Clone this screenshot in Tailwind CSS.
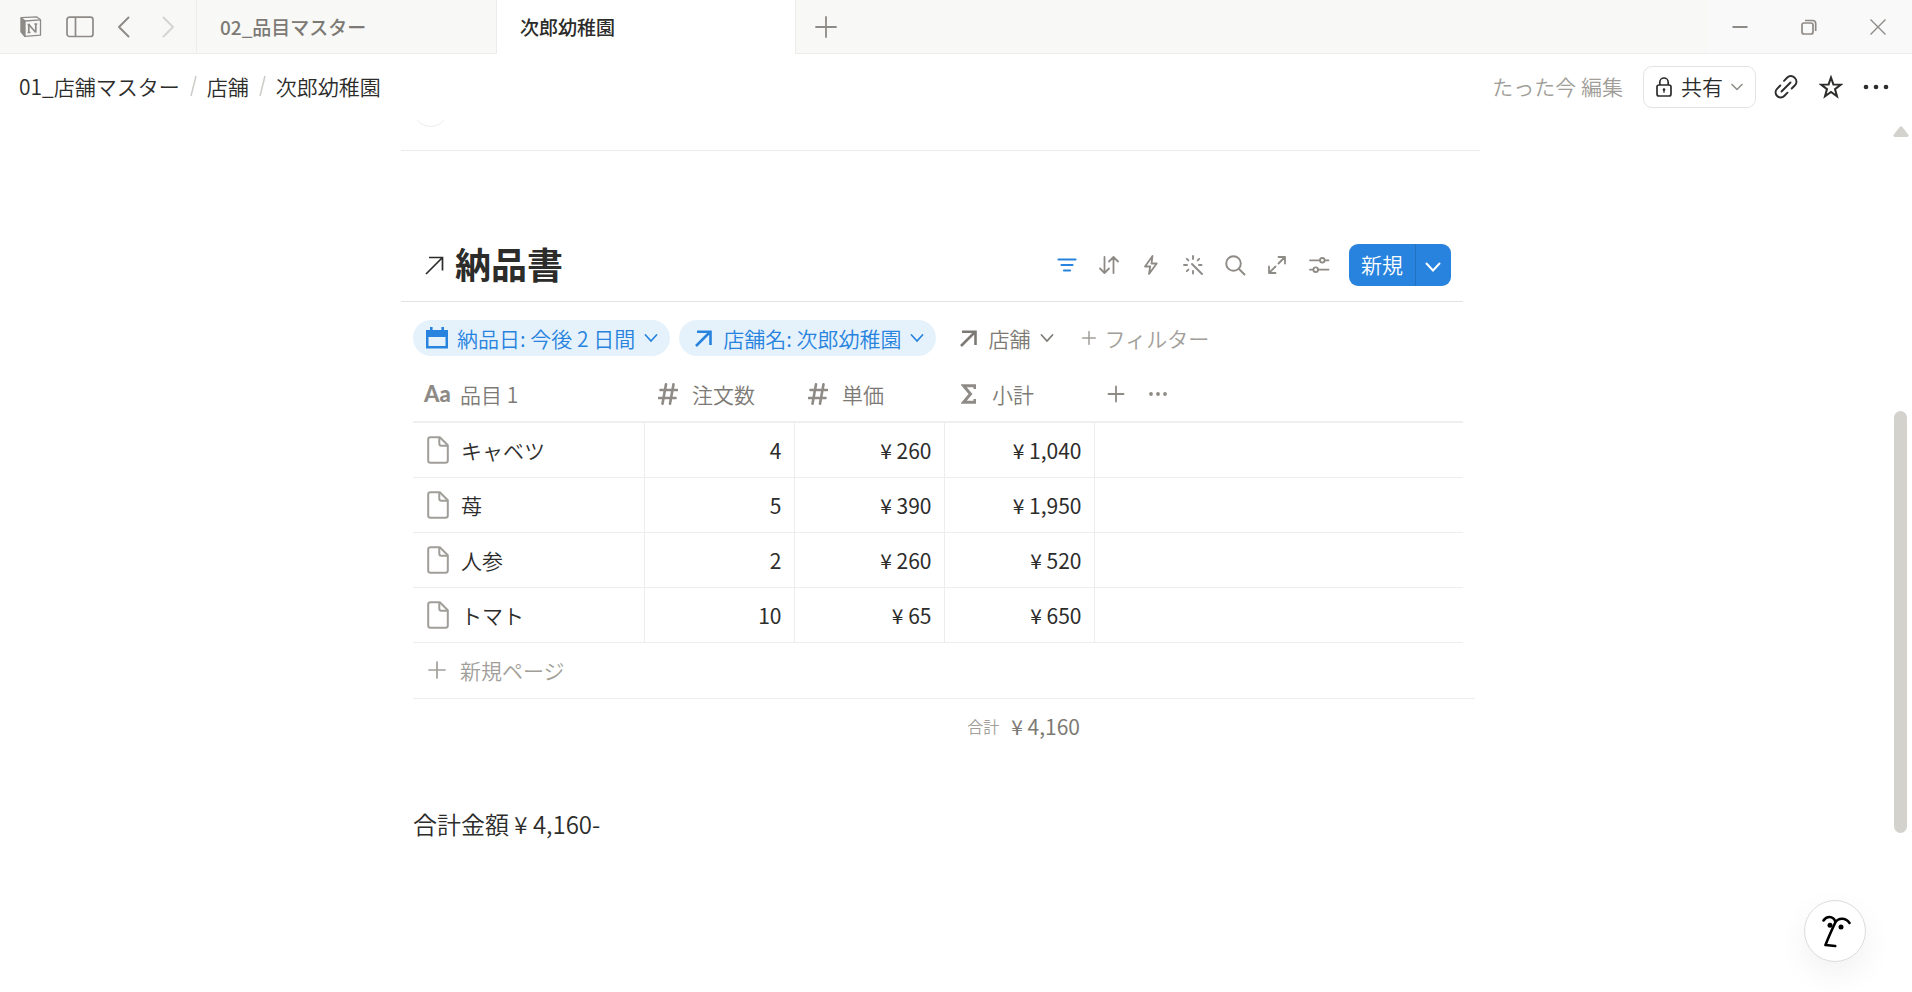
<!DOCTYPE html>
<html lang="ja">
<head>
<meta charset="utf-8">
<title>次郎幼稚園</title>
<script src="https://cdn.jsdelivr.net/npm/@tailwindcss/browser@4"></script>
</head>
<body class="relative flex h-screen flex-col overflow-hidden bg-white font-['Noto_Sans_CJK_JP',sans-serif] text-[21px] leading-[30px] font-[350] text-[#2c2c2b]">

<header class="flex h-[54px] shrink-0 bg-[#f8f8f7] text-[19px] font-medium text-[#7d7a75]">
  <div class="flex w-[197px] shrink-0 items-center border-r border-b border-[#ededec] text-[#8e8b86]">
    <button aria-label="Notion" class="ml-5 flex">
      <svg class="size-[22px]" viewBox="0 0 22 22" fill="none" stroke="currentColor" stroke-width="1.3" stroke-linejoin="round"><path d="M1.2 1.7 16.5.8l4 3v15.400L5 20.400l-3.800-4.500z"/><path d="M1.200 1.700 5 5v15.400l-3.800-4.500z" fill="currentColor"/><path d="M5 5l15.500-1.200"/><path d="M8.800 8.500v8M8.800 8.500l7 8M15.800 8v8.500M7.500 8.500h2.500M7.500 16.500h3M14.300 8h3" stroke-width="1.700"/></svg>
    </button>
    <button aria-label="サイドバー" class="ml-6 flex">
      <svg class="h-[22px] w-7" viewBox="0 0 28 22" fill="none" stroke="currentColor" stroke-width="1.700"><rect x="1" y="1.200" width="26" height="19.300" rx="2.500"/><path d="M9.500 1.200v19.300"/></svg>
    </button>
    <button aria-label="戻る" class="ml-6 flex">
      <svg class="h-[22px] w-3" viewBox="0 0 12 22" fill="none" stroke="currentColor" stroke-width="1.900" stroke-linecap="round" stroke-linejoin="round"><path d="M10.500 1.500 1 11l9.500 9.500"/></svg>
    </button>
    <button aria-label="進む" class="ml-8 flex text-[#d5d4d1]">
      <svg class="h-[22px] w-3" viewBox="0 0 12 22" fill="none" stroke="currentColor" stroke-width="1.900" stroke-linecap="round" stroke-linejoin="round"><path d="M1.500 1.500 11 11l-9.500 9.500"/></svg>
    </button>
  </div>
  <nav class="flex" aria-label="タブ">
    <button class="w-[300px] border-r border-b border-[#ededec] pl-[23px] text-left">02_品目マスター</button>
    <button class="w-[299px] border-r border-[#ededec] bg-white pl-[23px] text-left text-[#2c2c2b]">次郎幼稚園</button>
  </nav>
  <div class="flex flex-1 items-center border-b border-[#ededec] pl-[19px] text-[#8e8b86]">
    <button aria-label="新しいタブ" class="flex"><svg class="size-[22px]" viewBox="0 0 22 22" stroke="currentColor" stroke-width="1.800" stroke-linecap="round"><path d="M1 11h20M11 1v20"/></svg></button>
  </div>
  <div class="flex w-[205px] items-center border-b border-[#ededec] bg-[#f9f9f9] pl-[25px] text-[#8e8b86]">
    <button aria-label="最小化" class="flex"><svg class="size-4" viewBox="0 0 16 16" stroke="currentColor" stroke-width="2"><path d="M.500 8h15"/></svg></button>
    <button aria-label="元に戻す" class="ml-[53px] flex"><svg class="size-4" viewBox="0 0 16 16" fill="none" stroke="currentColor" stroke-width="1.700"><rect x="1" y="4" width="11" height="11" rx="2"/><path d="M4 1.500h7.500a3.200 3.200 0 0 1 3.200 3.200V12"/></svg></button>
    <button aria-label="閉じる" class="ml-[53px] flex"><svg class="size-4" viewBox="0 0 16 16" stroke="currentColor" stroke-width="1.400"><path d="m.500.500 15 15m0-15-15 15"/></svg></button>
  </div>
</header>

<div class="flex h-[66px] shrink-0 items-center pr-[23px] pl-[19px]">
  <nav class="flex items-center pb-0.5" aria-label="パンくず">
    <a href="#">01_店舗マスター</a>
    <svg class="mx-2.5 h-[22px] w-[7px] text-[#cfcdca]" viewBox="0 0 7 22" stroke="currentColor" stroke-width="1.500"><path d="M6 1 1 21"/></svg>
    <a href="#">店舗</a>
    <svg class="mx-2.5 h-[22px] w-[7px] text-[#cfcdca]" viewBox="0 0 7 22" stroke="currentColor" stroke-width="1.500"><path d="M6 1 1 21"/></svg>
    <a href="#">次郎幼稚園</a>
  </nav>
  <span class="ml-auto pb-0.5 text-[#a19e99]">たった今 編集</span>
  <button class="ml-5 flex h-[42px] items-center rounded-[9px] border border-[#e4e3e1] px-3">
    <svg class="h-5 w-4" viewBox="0 0 16 20" fill="none" stroke="currentColor" stroke-width="1.700"><rect x="1" y="8" width="14" height="11" rx="2"/><path d="M3.800 8V5.200a4.200 4.200 0 0 1 8.400 0V8"/><circle cx="8" cy="12.600" r="1.300" fill="currentColor" stroke="none"/><path d="M8 12.500v3.300" stroke-width="1.300"/></svg>
    <span class="ml-[9px] pb-0.5">共有</span>
    <svg class="ml-2 h-2 w-3 text-[#8e8b86]" viewBox="0 0 12 8" fill="none" stroke="currentColor" stroke-width="1.500" stroke-linecap="round"><path d="m1 1.500 5 5 5-5"/></svg>
  </button>
  <button aria-label="リンクをコピー" class="ml-[18px] flex"><svg class="size-6" viewBox="0 0 24 24" fill="none" stroke="currentColor" stroke-width="1.900" stroke-linecap="round"><path d="m7.500 16.500 9-9"/><path d="m10 5.800 3.300-3.300a4.900 4.900 0 0 1 7 0l.700.700a4.900 4.900 0 0 1 0 7l-3.300 3.300"/><path d="m6.300 10.500-3.300 3.300a4.900 4.900 0 0 0 0 7l.200.200a4.900 4.900 0 0 0 7 0l3.300-3.300"/></svg></button>
  <button aria-label="お気に入り" class="ml-[21px] flex"><svg class="size-6" viewBox="0 0 24 24" fill="none" stroke="currentColor" stroke-width="2"><path d="m12 2.500 2.400 6.900 7.400.200-5.800 4.500 2 7.100-6-4.200-6 4.200 2-7.100-5.800-4.500 7.400-.200z"/></svg></button>
  <button aria-label="その他" class="ml-5 flex"><svg class="size-[26px]" viewBox="0 0 26 26" fill="currentColor"><circle cx="3" cy="13" r="2.300"/><circle cx="13" cy="13" r="2.300"/><circle cx="23" cy="13" r="2.300"/></svg></button>
</div>

<div class="flex min-h-0 flex-1">
<main class="min-w-0 flex-1 overflow-hidden">
  <div class="mx-auto w-full max-w-[1086px]">
    <div class="flow-root h-[30px]"><div class="-mt-7 ml-3 size-[35px] rounded-full border border-[#ededec]"></div></div>
    <hr class="mr-[7px] border-[#ebebea]">
    <section class="mr-6">
      <div class="mt-[93px] flex h-[42px] items-center pr-3 pl-6">
        <svg class="size-[19px]" viewBox="0 0 19 19" fill="none" stroke="currentColor" stroke-width="1.700"><path d="M1 18 17.500 1.500M4 1.500h13.500v13"/></svg>
        <h2 class="ml-[11px] pb-1 text-[36px] leading-[42px] font-bold">納品書</h2>
        <div class="ml-auto flex gap-5 text-[#8e8b86]">
          <button aria-label="フィルター" class="flex text-[#2783de]"><svg class="size-[22px]" viewBox="0 0 22 22" stroke="currentColor" stroke-width="2.200" stroke-linecap="round"><path d="M2.500 5.500h17M5.500 11h11M8 16.500h6"/></svg></button>
          <button aria-label="並べ替え" class="flex"><svg class="size-[22px]" viewBox="0 0 22 22" fill="none" stroke="currentColor" stroke-width="1.800" stroke-linecap="round" stroke-linejoin="round"><path d="M6.500 3v16M2 14.500 6.500 19l4.500-4.500M15.500 19V3M11 7.500 15.500 3 20 7.500"/></svg></button>
          <button aria-label="オートメーション" class="flex"><svg class="size-[22px]" viewBox="0 0 22 22" fill="none" stroke="currentColor" stroke-width="1.800" stroke-linejoin="round"><path d="M12.500 2 5 12.500h5.200L9 20l7.700-10.500h-5.200z"/></svg></button>
          <button aria-label="AI" class="flex"><svg class="size-[22px]" viewBox="0 0 22 22" stroke="currentColor" stroke-width="1.900" stroke-linecap="round"><path d="m10 10 10 10M11 2v3M11 17v2.500M2 11h3M17 11h2.500M4.800 4.800l1.600 1.600M17.200 4.800l-1.600 1.600M4.800 17.200l1.600-1.600"/></svg></button>
          <button aria-label="検索" class="flex"><svg class="size-[22px]" viewBox="0 0 22 22" fill="none" stroke="currentColor" stroke-width="1.900" stroke-linecap="round"><circle cx="9.500" cy="9.500" r="7.300"/><path d="m15 15 5.500 5.500"/></svg></button>
          <button aria-label="展開" class="flex"><svg class="size-[22px]" viewBox="0 0 22 22" fill="none" stroke="currentColor" stroke-width="1.800" stroke-linecap="round" stroke-linejoin="round"><path d="m12.500 9.500 6.500-6.500M12.500 3H19v6.500M9.500 12.500 3 19M3 12.500V19h6.500"/></svg></button>
          <button aria-label="設定" class="flex"><svg class="size-[22px]" viewBox="0 0 22 22" fill="none" stroke="currentColor" stroke-width="1.800" stroke-linecap="round"><path d="M2 6.300h9.700M17 6.300h3.500M2 15.700h3M10.300 15.700h10.200"/><circle cx="14.300" cy="6.300" r="2.300"/><circle cx="7.700" cy="15.700" r="2.300"/></svg></button>
        </div>
        <div class="ml-[19px] flex h-[42px] overflow-hidden rounded-[9px] bg-[#2783de] text-white">
          <button class="w-[66px] pb-0.5">新規</button>
          <button aria-label="新規メニュー" class="flex w-9 items-center justify-center border-l border-[#2372c2]"><svg class="mt-1 mr-0.5 h-[10px] w-4" viewBox="0 0 16 10" fill="none" stroke="currentColor" stroke-width="2" stroke-linecap="round"><path d="m1.500 1.500 6.500 7 6.500-7"/></svg></button>
        </div>
      </div>
      <div class="mt-[15px] flex border-t border-[#e4e3e1] pt-[18px] pl-3 leading-9">
        <button class="flex h-9 items-center rounded-full bg-[#e5f2fc] px-3 text-[#2783de]">
          <svg class="size-6" viewBox="0 0 24 24" fill="none"><path d="M1 4h22v18.500H1zM5 1h2.600v4H5zM16.400 1H19v4h-2.600z" fill="currentColor"/><path d="M3.500 11h17v9h-17z" fill="#e5f2fc"/></svg>
          <span class="ml-2">納品日: 今後 2 日間</span>
          <svg class="ml-[9px] h-2 w-[14px]" viewBox="0 0 14 8" fill="none" stroke="currentColor" stroke-width="1.700" stroke-linecap="round"><path d="m1.500 1 5.500 6 5.500-6"/></svg>
        </button>
        <button class="ml-[9px] flex h-9 items-center rounded-full bg-[#e5f2fc] pr-3 pl-4 text-[#2783de]">
          <svg class="size-[17px]" viewBox="0 0 17 17" fill="none" stroke="currentColor" stroke-width="2.600"><path d="M1 16 15 2M2 1.700h13.500V15"/></svg>
          <span class="ml-[11px]">店舗名: 次郎幼稚園</span>
          <svg class="ml-2 h-2 w-[14px]" viewBox="0 0 14 8" fill="none" stroke="currentColor" stroke-width="1.700" stroke-linecap="round"><path d="m1.500 1 5.500 6 5.500-6"/></svg>
        </button>
        <button class="ml-6 flex h-9 items-center text-[#7d7a75]">
          <svg class="size-[17px]" viewBox="0 0 17 17" fill="none" stroke="currentColor" stroke-width="2.600"><path d="M1 16 15 2M2 1.700h13.500V15"/></svg>
          <span class="ml-3">店舗</span>
          <svg class="ml-[9px] h-2 w-[14px]" viewBox="0 0 14 8" fill="none" stroke="currentColor" stroke-width="1.700" stroke-linecap="round"><path d="m1.500 1 5.500 6 5.500-6"/></svg>
        </button>
        <button class="ml-7 flex h-9 items-center text-[#a19e99]">
          <svg class="size-[14px]" viewBox="0 0 14 14" stroke="currentColor" stroke-width="1.500" stroke-linecap="round"><path d="M.700 7h12.600M7 .700v12.600"/></svg>
          <span class="ml-[9px]">フィルター</span>
        </button>
      </div>

      <div class="mt-[11px] pl-3">
      <table class="w-full table-fixed border-collapse text-right">
        <colgroup><col class="w-[231px]"><col class="w-[150px]"><col class="w-[150px]"><col class="w-[150px]"><col></colgroup>
        <thead class="text-left text-[#7d7a75]">
          <tr class="h-[55px] border-b-2 border-[#f0efee]">
            <th scope="col" class="p-0 font-[350]"><div class="flex items-center pl-[11px]"><span aria-hidden="true" class="w-9 font-[Lato] text-[22px] font-black text-[#8e8b86]">Aa</span>品目 1</div></th>
            <th scope="col" class="p-0 font-[350]"><div class="flex items-center pl-[14px]"><svg class="mr-[14px] h-[22px] w-5 text-[#8e8b86]" viewBox="0 0 20 22" stroke="currentColor" stroke-width="2.600" stroke-linecap="round"><path d="M2.500 7h16.500M1 15h16.500M8 1.300 4.500 20.700M15.500 1.300 12 20.700"/></svg>注文数</div></th>
            <th scope="col" class="p-0 font-[350]"><div class="flex items-center pl-[14px]"><svg class="mr-[14px] h-[22px] w-5 text-[#8e8b86]" viewBox="0 0 20 22" stroke="currentColor" stroke-width="2.600" stroke-linecap="round"><path d="M2.500 7h16.500M1 15h16.500M8 1.300 4.500 20.700M15.500 1.300 12 20.700"/></svg>単価</div></th>
            <th scope="col" class="p-0 font-[350]"><div class="flex items-center pl-[17px]"><svg class="mr-4 h-5 w-[15px] text-[#8e8b86]" viewBox="0 0 15 20" fill="none" stroke="currentColor" stroke-width="3"><path d="M14 5V1.700H2.500L9.500 10l-7 8.300H14V15"/></svg>小計</div></th>
            <td class="p-0"><div class="flex items-center pl-[13px] text-[#8e8b86]"><button aria-label="列を追加" class="flex"><svg class="size-[18px]" viewBox="0 0 18 18" stroke="currentColor" stroke-width="1.800" stroke-linecap="round"><path d="M1.500 9h15M9 1.500v15"/></svg></button><button aria-label="列メニュー" class="ml-6 flex"><svg class="size-[18px]" viewBox="0 0 18 18" fill="currentColor"><circle cx="2" cy="9" r="1.900"/><circle cx="9" cy="9" r="1.900"/><circle cx="16" cy="9" r="1.900"/></svg></button></div></td>
          </tr>
        </thead>
        <tbody>
          <tr class="h-[55px] border-b border-[#ededec]">
            <th scope="row" class="border-r border-[#ededec] p-0 font-[350]"><div class="flex items-center pl-[14px]"><svg class="mr-3 h-7 w-[22px] text-[#a19e99]" viewBox="0 0 22 28" fill="none" stroke="currentColor" stroke-width="2" stroke-linejoin="round"><path d="M3.500 1.200h9.300l8 8v15.300a2.300 2.300 0 0 1-2.300 2.300h-15a2.300 2.300 0 0 1-2.300-2.300v-21a2.300 2.300 0 0 1 2.300-2.300z"/><path d="M12.300 1.400v6.300a2 2 0 0 0 2 2h6.300"/></svg>キャベツ</div></th>
            <td class="border-r border-[#ededec] px-3 font-normal">4</td><td class="border-r border-[#ededec] px-3 font-normal">¥ 260</td><td class="border-r border-[#ededec] px-3 font-normal">¥ 1,040</td><td></td>
          </tr>
          <tr class="h-[55px] border-b border-[#ededec]">
            <th scope="row" class="border-r border-[#ededec] p-0 font-[350]"><div class="flex items-center pl-[14px]"><svg class="mr-3 h-7 w-[22px] text-[#a19e99]" viewBox="0 0 22 28" fill="none" stroke="currentColor" stroke-width="2" stroke-linejoin="round"><path d="M3.500 1.200h9.300l8 8v15.300a2.300 2.300 0 0 1-2.300 2.300h-15a2.300 2.300 0 0 1-2.300-2.300v-21a2.300 2.300 0 0 1 2.300-2.300z"/><path d="M12.300 1.400v6.300a2 2 0 0 0 2 2h6.300"/></svg>苺</div></th>
            <td class="border-r border-[#ededec] px-3 font-normal">5</td><td class="border-r border-[#ededec] px-3 font-normal">¥ 390</td><td class="border-r border-[#ededec] px-3 font-normal">¥ 1,950</td><td></td>
          </tr>
          <tr class="h-[55px] border-b border-[#ededec]">
            <th scope="row" class="border-r border-[#ededec] p-0 font-[350]"><div class="flex items-center pl-[14px]"><svg class="mr-3 h-7 w-[22px] text-[#a19e99]" viewBox="0 0 22 28" fill="none" stroke="currentColor" stroke-width="2" stroke-linejoin="round"><path d="M3.500 1.200h9.300l8 8v15.300a2.300 2.300 0 0 1-2.300 2.300h-15a2.300 2.300 0 0 1-2.300-2.300v-21a2.300 2.300 0 0 1 2.300-2.300z"/><path d="M12.300 1.400v6.300a2 2 0 0 0 2 2h6.300"/></svg>人参</div></th>
            <td class="border-r border-[#ededec] px-3 font-normal">2</td><td class="border-r border-[#ededec] px-3 font-normal">¥ 260</td><td class="border-r border-[#ededec] px-3 font-normal">¥ 520</td><td></td>
          </tr>
          <tr class="h-[55px] border-b border-[#ededec]">
            <th scope="row" class="border-r border-[#ededec] p-0 font-[350]"><div class="flex items-center pl-[14px]"><svg class="mr-3 h-7 w-[22px] text-[#a19e99]" viewBox="0 0 22 28" fill="none" stroke="currentColor" stroke-width="2" stroke-linejoin="round"><path d="M3.500 1.200h9.300l8 8v15.300a2.300 2.300 0 0 1-2.300 2.300h-15a2.300 2.300 0 0 1-2.300-2.300v-21a2.300 2.300 0 0 1 2.300-2.300z"/><path d="M12.300 1.400v6.300a2 2 0 0 0 2 2h6.300"/></svg>トマト</div></th>
            <td class="border-r border-[#ededec] px-3 font-normal">10</td><td class="border-r border-[#ededec] px-3 font-normal">¥ 65</td><td class="border-r border-[#ededec] px-3 font-normal">¥ 650</td><td></td>
          </tr>
        </tbody>
      </table>
      </div>
    </section>

    <div class="px-3">
      <button class="flex h-14 w-full items-center border-b border-[#ededec] pl-[15px] text-[#a19e99]">
        <svg class="mr-[14px] size-[18px]" viewBox="0 0 18 18" stroke="currentColor" stroke-width="1.700" stroke-linecap="round"><path d="M1 9h16M9 1v16"/></svg>新規ページ
      </button>
      <div class="flex h-14 w-[667px] items-center justify-end gap-3 pb-0.5 text-[#7d7a75]">
        <span class="text-[16px] text-[#a19e99]">合計</span><span class="font-normal">¥ 4,160</span>
      </div>
      <p class="mt-[51px] text-[24px] leading-9">合計金額 ¥ 4,160-</p>
    </div>
  </div>
</main>
<div aria-hidden="true" class="flex w-6 shrink-0 flex-col items-center pl-px text-[#d3d2cd]">
  <svg class="mt-[6px] h-3 w-4 shrink-0" viewBox="0 0 16 12" fill="currentColor"><path d="M6.500 1.200a2 2 0 0 1 3 0l5.700 7.300c.900 1.200.200 2.500-1.200 2.500H2C.600 11-.100 9.700.800 8.500z"/></svg>
  <div class="grow-[273]"></div>
  <div class="h-[422px] w-[13px] rounded-full bg-[#d3d2cd]"></div>
  <div class="grow-[159]"></div>
</div>
</div>

<button aria-label="Notion AI" class="absolute right-[46px] bottom-[30px] flex size-[62px] items-center justify-center rounded-full border border-[#dddcda] bg-white text-black shadow-[0_12px_32px_rgba(0,0,0,0.06)]">
  <svg class="h-9 w-8" viewBox="0 0 32 36" fill="none" stroke="currentColor" stroke-width="2.600" stroke-linecap="round" stroke-linejoin="round"><path d="M4.500 7.500C7.500 3 14 2.500 16.300 8.500M30.500 10C26.500 4 19 5 16.300 9.500 13 16.500 9.500 24 6.500 32l9.700 1"/><circle cx="11" cy="12.300" r="2.500" fill="currentColor" stroke="none"/><circle cx="22" cy="14" r="2.500" fill="currentColor" stroke="none"/></svg>
</button>
</body>
</html>
